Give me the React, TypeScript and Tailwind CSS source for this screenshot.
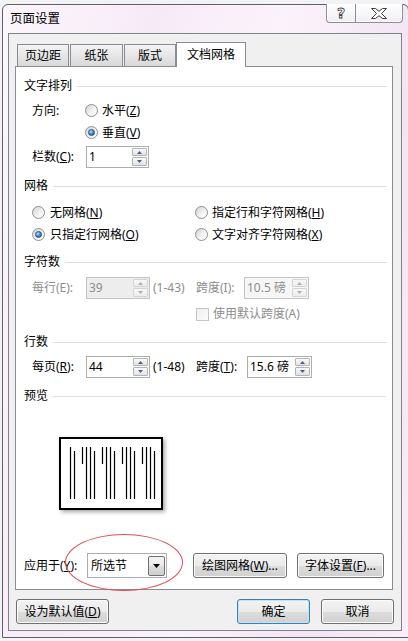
import React from "react";

function Radio({ checked }: { checked?: boolean }) {
  return (
    <span className="w-[13px] h-[13px] rounded-full border border-[#8e8f8f] bg-[linear-gradient(135deg,#d4d4d4,#f4f4f4_60%,#ffffff)] flex items-center justify-center shrink-0">
      {checked && (
        <span className="w-[7px] h-[7px] rounded-full border border-[#1c4f82] bg-[radial-gradient(circle_at_35%_30%,#b6e2ff,#3a87cf_55%,#14508e)]" />
      )}
    </span>
  );
}

function Spin({ disabled }: { disabled?: boolean }) {
  const arrow = disabled ? "#b0b0b0" : "#4a5f86";
  const box = disabled
    ? "border-[#d4d4d4] bg-[linear-gradient(#f7f7f7,#ededed)]"
    : "border-[#b3b3b3] bg-[linear-gradient(#fafafa,#e2e2e2)]";
  return (
    <div className="flex flex-col gap-[1px] w-[15px] shrink-0">
      <div className={`h-[8px] border rounded-[1px] flex items-center justify-center ${box}`}>
        <svg width="5" height="3" viewBox="0 0 5 3">
          <path d="M2.5 0L5 3H0z" fill={arrow} />
        </svg>
      </div>
      <div className={`h-[9px] border rounded-[1px] flex items-center justify-center ${box}`}>
        <svg width="5" height="3" viewBox="0 0 5 3">
          <path d="M0 0H5L2.5 3z" fill={arrow} />
        </svg>
      </div>
    </div>
  );
}

function Field({
  value,
  className,
  disabled,
}: {
  value: string;
  className: string;
  disabled?: boolean;
}) {
  return (
    <div
      className={`h-[22px] border flex items-center pl-[2px] pr-[1px] shrink-0 ${
        disabled ? "border-[#c4c4c4] text-[#8d8d8d]" : "border-[#abadb3] bg-white"
      } ${className}`}
    >
      <span className="flex-1">{value}</span>
      <Spin disabled={disabled} />
    </div>
  );
}

function Section({ title, className }: { title: string; className: string }) {
  return (
    <div className={`flex items-center h-[20px] ml-[8px] mr-[6px] ${className}`}>
      <span>{title}</span>
      <div className="flex-1 h-px bg-[#d5dfe5] ml-[5px]" />
    </div>
  );
}

function Btn({
  children,
  className,
  def,
}: {
  children: React.ReactNode;
  className: string;
  def?: boolean;
}) {
  return (
    <div
      className={`h-[25px] rounded-[3px] border flex items-center justify-center shrink-0 bg-[linear-gradient(#f3f3f3_0%,#ebebeb_50%,#dddddd_51%,#d0d0d0_100%)] ${
        def
          ? "border-[#3c7fb1] shadow-[inset_0_0_0_1px_#bfe4f8]"
          : "border-[#707070] shadow-[inset_0_0_0_1px_#fbfbfb]"
      } ${className}`}
    >
      {children}
    </div>
  );
}

const Tab = ({ label, className }: { label: string; className: string }) => (
  <div
    className={`h-[22px] border border-b-0 border-[#898c95] bg-[linear-gradient(#f3f3f3,#e6e6e6_50%,#d9d9d9)] flex items-center justify-center ${className}`}
  >
    {label}
  </div>
);

function Preview() {
  const groups = [62, 82, 102, 122, 142];
  const lines: { x: number; y1: number; y2: number }[] = [];
  groups.forEach((b) => {
    if (b > 62) {
      lines.push({ x: b, y1: 447, y2: 464 });
      lines.push({ x: b + 4, y1: 447, y2: 499 });
    }
    lines.push({ x: b + 8, y1: 447, y2: 499 });
    lines.push({ x: b + 12, y1: 451, y2: 499 });
  });
  return (
    <div className="mt-[31px] ml-[43px] w-[104px] h-[73px] border-2 border-black bg-white shadow-[2px_2px_4px_rgba(0,0,0,0.35)]">
      <svg width="100" height="69" viewBox="0 0 100 69">
        {lines.map((l, i) => (
          <line
            key={i}
            x1={l.x - 61 + 0.5}
            x2={l.x - 61 + 0.5}
            y1={l.y1 - 439}
            y2={l.y2 - 439}
            stroke="#000"
            strokeWidth="1.2"
          />
        ))}
      </svg>
    </div>
  );
}

export default function App() {
  return (
    <div className="w-[408px] h-[641px] overflow-hidden bg-[#f3f3f5] font-['Noto_Sans','Noto_Sans_CJK_SC',sans-serif] text-[12px] leading-[16px] text-black">
      <div className="ml-[2px] mt-[4px] w-[407px] h-[634px] border border-[#5f6166] rounded-t-[6px] bg-[linear-gradient(100deg,#fcf6fc_0%,#f7eaf7_30%,#fbf3fb_55%,#f4e4f4_80%,#f9eef9_100%)] flex flex-col">
        {/* title bar */}
        <div className="h-[28px] flex items-start justify-between">
          <div className="pl-[7px] pt-[5px] text-[12.5px] leading-[17px]">页面设置</div>
          <div className="-mt-[1px] mr-[5px] h-[19px] flex border border-t-0 border-[#8b8e94] rounded-b-[4px] bg-[linear-gradient(#ffffff,#f1eef3)] shadow-[inset_0_0_0_1px_rgba(255,255,255,0.8)]">
            <div className="w-[29px] flex items-center justify-center border-r border-[#8b8e94]">
              <span className="text-[14px] leading-[14px] text-white [-webkit-text-stroke:0.8px_#3d3d3d] font-['DejaVu_Sans',sans-serif] font-bold">?</span>
            </div>
            <div className="w-[46px] flex items-center justify-center">
              <svg width="16" height="11" viewBox="0 0 16 11">
                <path
                  d="M0.5 0.5H4.5L8 3.3L11.5 0.5H15.5L10.5 5.5L15.5 10.5H11.5L8 7.7L4.5 10.5H0.5L5.5 5.5Z"
                  fill="#fff"
                  stroke="#3d3d3d"
                  strokeWidth="1"
                />
              </svg>
            </div>
          </div>
        </div>
        {/* client */}
        <div className="ml-[5px] w-[394px] h-[598px] border border-[#7f8287] bg-[#f0f0f0] flex flex-col">
          <div className="ml-[6px] pt-[8px] flex flex-col">
            {/* tabs */}
            <div className="h-[24px] pl-[2px] flex items-end">
              <Tab label="页边距" className="w-[52px]" />
              <Tab label="纸张" className="w-[53px] ml-[1px]" />
              <Tab label="版式" className="w-[52px] ml-[1px]" />
              <div className="relative z-10 w-[70px] h-[25px] -mb-[1px] border border-b-0 border-[#898c95] bg-white flex items-center justify-center pb-[1px]">
                文档网格
              </div>
            </div>
            {/* panel */}
            <div className="relative w-[378px] h-[524px] border border-[#898c95] bg-white flex flex-col">
              <Section title="文字排列" className="mt-[9px]" />
              <div className="mt-[4px] h-[21px] pl-[16px] flex items-center">
                <span className="w-[53px]">方向:</span>
                <Radio />
                <span className="ml-[4px]">
                  水平(<u>Z</u>)
                </span>
              </div>
              <div className="mt-[1px] h-[21px] pl-[69px] flex items-center">
                <Radio checked />
                <span className="ml-[4px]">
                  垂直(<u>V</u>)
                </span>
              </div>
              <div className="mt-[3px] h-[22px] pl-[16px] flex items-center">
                <span className="w-[54px]">
                  栏数(<u>C</u>):
                </span>
                <Field value="1" className="w-[63px]" />
              </div>

              <Section title="网格" className="mt-[8px]" />
              <div className="mt-[6px] h-[21px] pl-[16px] flex items-center">
                <div className="w-[163px] flex items-center gap-[5px]">
                  <Radio />
                  <span>
                    无网格(<u>N</u>)
                  </span>
                </div>
                <div className="flex items-center gap-[4px]">
                  <Radio />
                  <span>
                    指定行和字符网格(<u>H</u>)
                  </span>
                </div>
              </div>
              <div className="mt-[1px] h-[21px] pl-[16px] flex items-center">
                <div className="w-[163px] flex items-center gap-[5px]">
                  <Radio checked />
                  <span>
                    只指定行网格(<u>O</u>)
                  </span>
                </div>
                <div className="flex items-center gap-[4px]">
                  <Radio />
                  <span>
                    文字对齐字符网格(<u>X</u>)
                  </span>
                </div>
              </div>

              <Section title="字符数" className="mt-[7px]" />
              <div className="mt-[5px] h-[22px] pl-[16px] flex items-center text-[#8d8d8d]">
                <span className="w-[54px]">每行(E):</span>
                <Field value="39" disabled className="w-[64px] bg-[#ededed]" />
                <span className="ml-[3px] w-[43px]">(1-43)</span>
                <span className="w-[48px]">跨度(I):</span>
                <Field value="10.5 磅" disabled className="w-[65px] bg-[#f6f6f6]" />
              </div>
              <div className="mt-[5px] h-[20px] pl-[180px] flex items-center text-[#8d8d8d]">
                <span className="w-[13px] h-[13px] border border-[#c6c6c6] bg-[linear-gradient(135deg,#f0f0f0,#fbfbfb)] shrink-0" />
                <span className="ml-[4px]">使用默认跨度(A)</span>
              </div>

              <Section title="行数" className="mt-[8px]" />
              <div className="mt-[4px] h-[22px] pl-[16px] flex items-center">
                <span className="w-[54px]">
                  每页(<u>R</u>):
                </span>
                <Field value="44" className="w-[64px]" />
                <span className="ml-[3px] w-[43px]">(1-48)</span>
                <span className="w-[51px]">
                  跨度(<u>T</u>):
                </span>
                <Field value="15.6 磅" className="w-[65px]" />
              </div>

              <Section title="预览" className="mt-[8px]" />
              <Preview />

              <div className="mt-[43px] h-[25px] pl-[8px] flex items-center">
                <span className="w-[63px]">
                  应用于(<u>Y</u>):
                </span>
                <div className="w-[80px] h-[25px] border border-[#abadb3] bg-white flex items-center pl-[3px] pr-[1px]">
                  <span className="flex-1">所选节</span>
                  <div className="w-[17px] h-[20px] border border-[#707070] rounded-[2px] bg-[linear-gradient(#f3f3f3,#ebebeb_50%,#dddddd_51%,#cfcfcf)] flex items-center justify-center">
                    <svg width="7" height="4" viewBox="0 0 7 4">
                      <path d="M0 0H7L3.5 4z" fill="#000" />
                    </svg>
                  </div>
                </div>
                <Btn className="ml-[26px] w-[94px]">
                  绘图网格(<u>W</u>)...
                </Btn>
                <Btn className="ml-[10px] w-[87px]">
                  字体设置(<u>F</u>)...
                </Btn>
              </div>

              <div className="absolute left-[49px] top-[467px] w-[118px] h-[57px] rounded-[50%] border border-[#e24c4c]" />
            </div>
          </div>
          {/* bottom buttons */}
          <div className="mt-[9px] flex items-center">
            <Btn className="ml-[7px] w-[93px]">
              设为默认值(<u>D</u>)
            </Btn>
            <Btn def className="ml-[128px] w-[73px]">
              确定
            </Btn>
            <Btn className="ml-[11px] w-[73px]">取消</Btn>
          </div>
        </div>
      </div>
    </div>
  );
}
